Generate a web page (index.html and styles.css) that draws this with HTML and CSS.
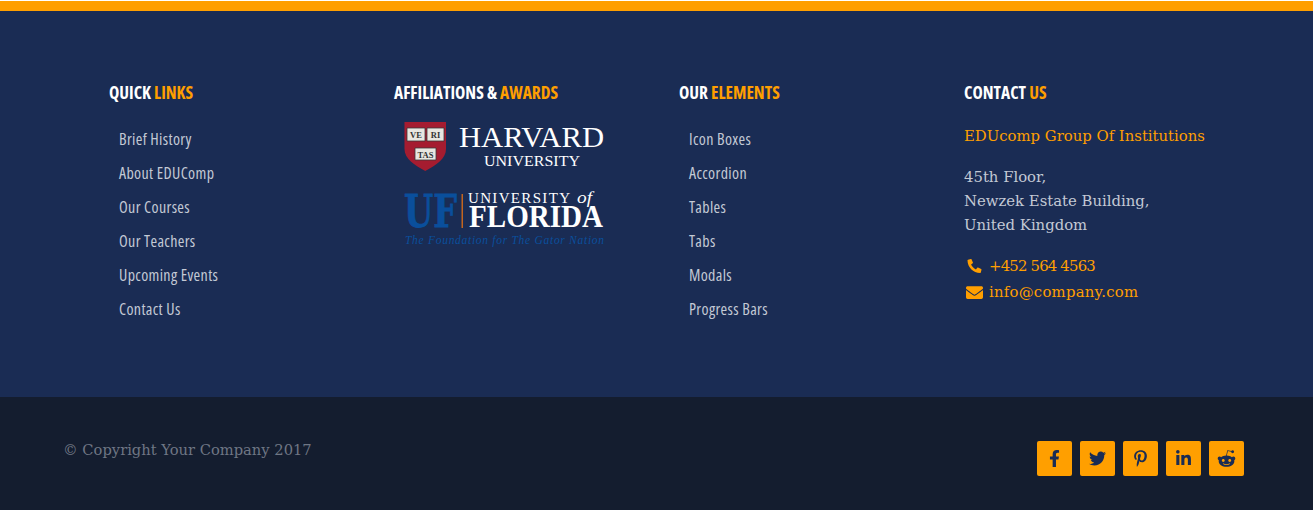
FILE: index.html
```html
<!DOCTYPE html>
<html lang="en">
<head>
<meta charset="utf-8">
<title>EDUcomp Footer</title>
<link rel="stylesheet" href="styles.css">
</head>
<body>
<footer class="footer">
  <div class="footer-main">
    <section class="col">
      <h4 class="col-title">QUICK <span class="accent">LINKS</span></h4>
      <ul class="links">
        <li>Brief History</li><li>About EDUComp</li><li>Our Courses</li><li>Our Teachers</li><li>Upcoming Events</li><li>Contact Us</li>
      </ul>
    </section>
    <section class="col">
      <h4 class="col-title">AFFILIATIONS &amp; <span class="accent">AWARDS</span></h4>
      <div class="logos">
        <svg class="logo" width="202" height="50" viewBox="0 0 202 50" role="img" aria-label="Harvard University">
          <path d="M.5 0H42V27C42 37 32 43 21.250 49C10.500 43 .5 37 .5 27Z" fill="#a51c30"/>
          <g fill="#e8e6e0" stroke="#3a3a3a" stroke-width=".8">
            <path d="M3 6H21V19H3Z"/><path d="M23 6H40V19H23Z"/><path d="M11 26H32V38H11Z"/>
          </g>
          <g class="shield-text"><text x="12" y="16" text-anchor="middle">VE</text><text x="31.500" y="16" text-anchor="middle">RI</text><text x="21.500" y="35.500" text-anchor="middle">TAS</text></g>
          <text class="harvard" x="55" y="25" textLength="145" lengthAdjust="spacingAndGlyphs">HARVARD</text>
          <text class="university" x="80" y="43.500" textLength="96" lengthAdjust="spacingAndGlyphs">UNIVERSITY</text>
        </svg>
        <svg class="logo" width="202" height="56" viewBox="0 0 202 56" role="img" aria-label="University of Florida">
          <text class="uf" x="0" y="35" textLength="53" lengthAdjust="spacingAndGlyphs">UF</text>
          <path d="M57.500 2H59V36H57.500Z" fill="#c2651f"/>
          <text class="univ" x="64" y="11" textLength="102" lengthAdjust="spacing">UNIVERSITY</text>
          <text class="of" x="173" y="11" textLength="15" lengthAdjust="spacingAndGlyphs">of</text>
          <text class="florida" x="65" y="35" textLength="134" lengthAdjust="spacingAndGlyphs">FLORIDA</text>
          <text class="tagline" x="1" y="52" textLength="199" lengthAdjust="spacing">The Foundation for The Gator Nation</text>
        </svg>
      </div>
    </section>
    <section class="col">
      <h4 class="col-title">OUR <span class="accent">ELEMENTS</span></h4>
      <ul class="links">
        <li>Icon Boxes</li><li>Accordion</li><li>Tables</li><li>Tabs</li><li>Modals</li><li>Progress Bars</li>
      </ul>
    </section>
    <section class="col">
      <h4 class="col-title">CONTACT <span class="accent">US</span></h4>
      <h5 class="org">EDUcomp Group Of Institutions</h5>
      <p class="address">45th Floor,<br>Newzek Estate Building,<br>United Kingdom</p>
      <div class="contact-line">
        <svg class="ci ci-phone" viewBox="0 0 512 512"><path transform="matrix(-1 0 0 1 512 0)" d="M493.4 24.6l-104-24c-11.3-2.6-22.9 3.300-27.500 13.900l-48 112c-4.200 9.800-1.400 21.300 6.900 28l60.600 49.600c-36 76.700-98.900 140.500-177.200 177.200l-49.600-60.600c-6.800-8.300-18.200-11.100-28-6.900l-112 48C3.900 366.500-2 378.100.6 389.400l24 104C27.100 504.200 36.700 512 48 512c256.100 0 464-207.500 464-464 0-11.200-7.700-20.900-18.600-23.400z"/></svg>
        <span class="phone">+452 564 4563</span>
      </div>
      <div class="contact-line">
        <svg class="ci" viewBox="0 0 512 512"><path d="M502.300 190.800c3.900-3.100 9.700-.2 9.700 4.700V400c0 26.500-21.500 48-48 48H48c-26.500 0-48-21.500-48-48V195.600c0-5 5.700-7.800 9.700-4.700 22.400 17.400 52.100 39.500 154.100 113.600 21.100 15.400 56.700 47.800 92.200 47.600 35.700.3 72-32.800 92.300-47.600 102-74.100 131.600-96.300 154-113.700zM256 320c23.200.4 56.600-29.200 73.400-41.400 132.700-96.300 142.800-104.700 173.400-128.700 5.800-4.500 9.200-11.500 9.200-18.900v-19c0-26.500-21.500-48-48-48H48C21.500 64 0 85.500 0 112v19c0 7.400 3.400 14.300 9.200 18.900 30.600 23.900 40.700 32.400 173.400 128.700 16.800 12.200 50.200 41.800 73.400 41.400z"/></svg>
        <span class="email">info@company.com</span>
      </div>
    </section>
  </div>
  <div class="footer-bottom">
    <p class="copyright">© Copyright Your Company 2017</p>
    <div class="social">
      <a class="social-btn"><svg viewBox="0 0 320 512" width="11" height="17"><path d="M279.140 288l14.220-92.660h-88.910v-60.130c0-25.350 12.420-50.060 52.240-50.060h40.420V6.260S260.430 0 225.360 0c-73.220 0-121.080 44.380-121.080 124.720v70.620H22.890V288h81.390v224h100.170V288z"/></svg></a>
      <a class="social-btn"><svg viewBox="0 0 512 512" width="17" height="17"><path d="M459.370 151.716c.325 4.548.325 9.097.325 13.645 0 138.720-105.583 298.558-298.558 298.558-59.452 0-114.680-17.219-161.137-47.106 8.447.974 16.568 1.299 25.340 1.299 49.055 0 94.213-16.568 130.274-44.832-46.132-.975-84.792-31.188-98.112-72.772 6.498.974 12.995 1.624 19.818 1.624 9.421 0 18.843-1.300 27.614-3.573-48.081-9.747-84.143-51.980-84.143-102.985v-1.299c13.969 7.797 30.214 12.670 47.431 13.319-28.264-18.843-46.781-51.005-46.781-87.391 0-19.492 5.197-37.360 14.294-52.954 51.655 63.675 129.300 105.258 216.365 109.807-1.624-7.797-2.599-15.918-2.599-24.040 0-57.828 46.782-104.934 104.934-104.934 30.213 0 57.502 12.670 76.670 33.137 23.715-4.548 46.456-13.320 66.599-25.340-7.798 24.366-24.366 44.833-46.132 57.827 21.117-2.273 41.584-8.122 60.426-16.243-14.292 20.791-32.161 39.308-52.628 54.253z"/></svg></a>
      <a class="social-btn"><svg viewBox="0 0 384 512" width="13" height="17"><path d="M204 6.500C101.400 6.500 0 74.900 0 185.600 0 256 39.600 296 63.600 296c9.900 0 15.600-27.600 15.600-35.400 0-9.300-23.700-29.100-23.700-67.800 0-80.400 61.200-137.400 140.400-137.400 68.100 0 118.500 38.700 118.500 109.800 0 53.100-21.300 152.700-90.300 152.700-24.900 0-46.200-18-46.200-43.800 0-37.800 26.400-74.400 26.400-113.400 0-66.200-93.900-54.200-93.900 25.800 0 16.800 2.100 35.400 9.600 50.700-13.800 59.400-42 147.900-42 209.100 0 18.900 2.700 37.500 4.500 56.400 3.400 3.800 1.700 3.400 6.900 1.500 50.400-69 48.600-82.500 71.400-172.800 12.300 23.400 44.100 36 69.300 36 106.200 0 153.900-103.500 153.900-196.800C384 71.300 298.200 6.500 204 6.500z"/></svg></a>
      <a class="social-btn"><svg viewBox="0 0 448 512" width="15" height="17"><path d="M100.280 448H7.400V148.900h92.880zM53.790 108.100C24.090 108.100 0 83.500 0 53.800a53.790 53.790 0 0 1 107.580 0c0 29.700-24.100 54.300-53.790 54.300zM447.900 448h-92.680V302.400c0-34.700-.7-79.200-48.290-79.200-48.290 0-55.690 37.700-55.690 76.700V448h-92.780V148.900h89.080v40.800h1.300c12.400-23.500 42.690-48.300 87.880-48.300 94 0 111.280 61.900 111.280 142.300V448z"/></svg></a>
      <a class="social-btn"><svg viewBox="0 0 512 512" width="19" height="19"><path d="M440.300 203.500c-15 0-28.200 6.200-37.900 15.900-35.700-24.700-83.800-40.600-137.100-42.300L293 52.300l88.200 19.800c0 21.600 17.600 39.200 39.200 39.200 22 0 39.700-18.100 39.700-39.700s-17.600-39.700-39.700-39.700c-15.400 0-28.700 9.300-35.300 22l-97.400-21.600c-4.900-1.300-9.700 2.200-11 7.100L246.300 177c-52.900 2.200-100.500 18.100-136.300 42.800-9.700-10.100-23.400-16.300-38.400-16.300-55.600 0-73.800 74.600-22.900 100.100-1.800 7.900-2.600 16.300-2.600 24.700 0 83.800 94.400 151.700 210.300 151.700 116.400 0 210.800-67.900 210.800-151.700 0-8.400-.9-17.200-3.100-25.100 49.900-25.600 31.500-99.700-23.800-99.700zM129.400 308.900c0-22 17.600-39.700 39.700-39.700 21.600 0 39.200 17.600 39.200 39.700 0 21.600-17.600 39.200-39.200 39.200-22 .1-39.700-17.600-39.700-39.200zm214.300 93.500c-36.400 36.400-139.100 36.400-175.500 0-4-3.500-4-9.700 0-13.700 3.500-3.500 9.700-3.500 13.200 0 27.800 28.500 120 29 149 0 3.500-3.500 9.700-3.500 13.200 0 4.100 4 4.100 10.200.1 13.700zm-.8-54.200c-21.600 0-39.200-17.600-39.200-39.200 0-22 17.600-39.700 39.200-39.700 22 0 39.700 17.600 39.700 39.700-.1 21.500-17.700 39.200-39.700 39.200z"/></svg></a>
    </div>
  </div>
</footer>
</body>
</html>
```

FILE: styles.css
```css
* { box-sizing: border-box; }
html, body { margin: 0; padding: 0; }
body { background: #fff; font-family: "Open Sans", sans-serif; font-stretch: 75%; height: 510px; overflow: hidden; }
.footer { margin-top: 1px; border-top: 10px solid #ff9f00; }
.footer-main { background: #1a2c54; height: 386px; padding: 70px 0 0 109px; display: grid; grid-template-columns: repeat(4, 285px); }
.col-title { margin: 0; font-size: 17.400px; line-height: 22px; font-weight: 700; color: #fff; }
.accent { color: #ff9f00; }
.links { list-style: none; margin: 19px 0 0; padding: 0 0 0 10px; }
.links li { height: 34px; line-height: 34px; font-size: 16px; letter-spacing: .35px; color: #c3c9d4; }
.logos { margin-top: 19px; margin-left: 10px; display: flex; flex-direction: column; gap: 20px; }
.logo { display: block; overflow: visible; }
.shield-text { font: 700 8.500px "Liberation Serif", serif; fill: #333; }
.harvard { font: 400 30px "Liberation Serif", serif; fill: #fff; }
.university { font: 400 15px "Liberation Serif", serif; fill: #fff; }
.uf { font: 700 45px "DejaVu Serif", serif; fill: #0a4f9c; stroke: #0a4f9c; stroke-width: .8px; }
.univ { font: 400 15px "Liberation Serif", serif; fill: #fff; }
.of { font: italic 400 17px "Liberation Serif", serif; fill: #fff; }
.florida { font: 700 31px "Liberation Serif", serif; fill: #fff; }
.tagline { font: italic 400 11.500px "Liberation Serif", serif; fill: #0a4f9c; }
.org { margin: 21px 0 0; font: 400 14.850px/24px "DejaVu Serif", serif; color: #ff9f00; }
.address { margin: 17px 0 0; font: 400 14.850px/24px "DejaVu Serif", serif; color: #c3c9d4; }
.contact-line { display: flex; align-items: center; gap: 4px; height: 26px; font: 400 14.850px/26px "DejaVu Serif", serif; color: #ff9f00; }
.address + .contact-line { margin-top: 16px; }
.phone { letter-spacing: -.8px; }
.email { letter-spacing: .25px; }
.ci { width: 21px; height: 17px; fill: #ff9f00; flex: none; }
.ci-phone { height: 14px; }
.footer-bottom { background: #141d2f; height: 113px; padding: 44px 69px 0 63px; display: flex; justify-content: space-between; align-items: flex-start; }
.copyright { margin: 0; font: 400 14.700px/18px "DejaVu Serif", serif; color: #6f7684; }
.social { display: flex; gap: 8px; }
.social-btn { width: 35px; height: 35px; border-radius: 2px; background: #ff9f00; display: flex; align-items: center; justify-content: center; }
.social-btn svg { fill: #1a2c54; display: block; }
```
